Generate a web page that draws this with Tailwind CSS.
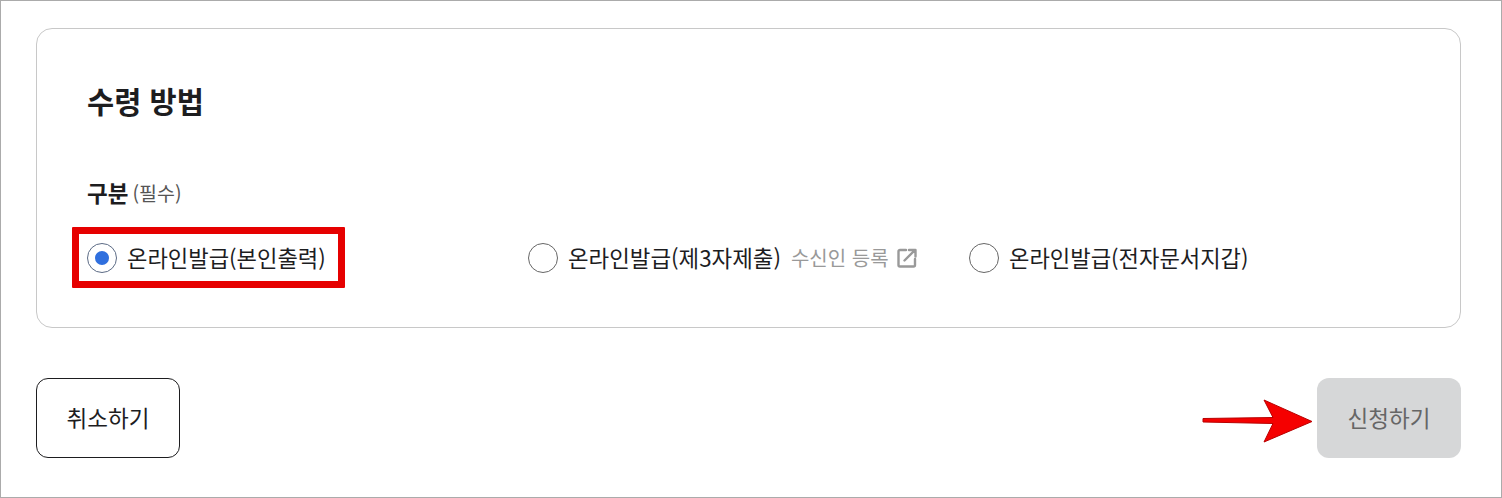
<!DOCTYPE html>
<html lang="ko">
<head>
    <meta charset="UTF-8">
    <title>수령 방법</title>
    <script src="https://cdn.jsdelivr.net/npm/@tailwindcss/browser@4"></script>
</head>
<body class="bg-white">
    <div class="relative w-[1502px] h-[498px] border border-[#ababab] bg-white pl-[35px] pr-[40px] pt-[27px] font-['Noto_Sans_CJK_KR','Noto_Sans',sans-serif] text-[#1d1d1f]">
        <!-- card -->
        <section class="h-[300px] border border-[#c8c8c8] rounded-[16px] px-[50px] pt-[49px]">
            <h2 class="text-[29.5px] leading-[44px] font-bold">수령 방법</h2>
            <div class="mt-[56px] flex items-center h-[30px]">
                <span class="text-[22.500px] font-bold">구분</span>
                <span class="ml-[4px] text-[19.500px] text-[#555]">(필수)</span>
            </div>
            <div class="mt-[35px] grid grid-cols-3">
                <label class="flex items-center gap-[10px] h-[30px]">
                    <span class="w-[30px] h-[30px] rounded-full border border-[#5c6b85] flex items-center justify-center">
                        <span class="w-[14px] h-[14px] rounded-full bg-[#2f6fde]"></span>
                    </span>
                    <span class="text-[22.200px]">온라인발급(본인출력)</span>
                </label>
                <label class="flex items-center gap-[10px] h-[30px]">
                    <span class="w-[30px] h-[30px] rounded-full border border-[#666]"></span>
                    <span class="text-[22.400px]">온라인발급(제3자제출)</span>
                    <span class="flex items-center text-[20px] text-[#999] gap-[7px]">수신인 등록
                        <svg class="w-[22px] h-[22px]" viewBox="0 0 22 22" fill="none" stroke="#999" stroke-width="2.4" stroke-linejoin="round" stroke-linecap="round">
                            <path d="M10 3H4a1.500 1.500 0 0 0-1.500 1.500V18A1.500 1.500 0 0 0 4 19.500h13.500A1.500 1.500 0 0 0 19 18v-6"/>
                            <path d="M8.500 13.500L19 3M13 3h6.500v6.500"/>
                        </svg>
                    </span>
                </label>
                <label class="flex items-center gap-[10px] h-[30px]">
                    <span class="w-[30px] h-[30px] rounded-full border border-[#666]"></span>
                    <span class="text-[22.200px]">온라인발급(전자문서지갑)</span>
                </label>
            </div>
        </section>

        <!-- buttons -->
        <div class="mt-[50px] flex justify-between">
            <button class="w-[144px] h-[80px] rounded-[12px] border border-[#1d1d1f] bg-white text-[22.500px]">취소하기</button>
            <button class="w-[144px] h-[80px] rounded-[12px] bg-[#d6d7d8] text-[22.500px] text-[#666]">신청하기</button>
        </div>

        <!-- annotations on top of the capture -->
        <div class="absolute left-[71px] top-[226px] w-[273px] h-[61px] border-[7px] border-[#e60000] rounded-[1px]"></div>
        <svg class="absolute left-[1201px] top-[398px]" width="112" height="45" viewBox="0 0 112 45">
            <path d="M1 19.500L71 18.500L62 1L110 22.500L62 43L71 24.500L1 23Z" fill="#f50000" stroke="#b80000" stroke-width="1"/>
        </svg>
    </div>
</body>
</html>
